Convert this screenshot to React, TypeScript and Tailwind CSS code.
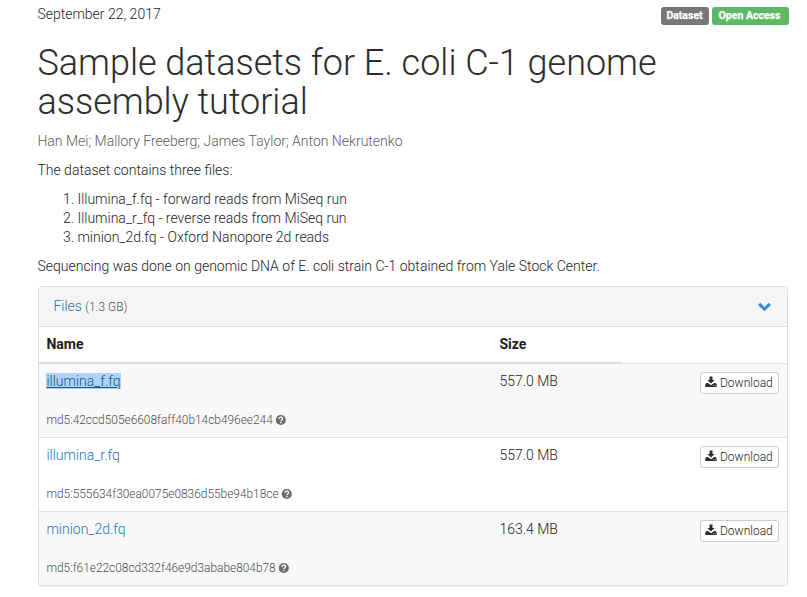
const files = [
  { name: "illumina_f.fq", size: "557.0 MB", md5: "42ccd505e6608faff40b14cb496ee244", selected: true },
  { name: "illumina_r.fq", size: "557.0 MB", md5: "555634f30ea0075e0836d55be94b18ce", selected: false },
  { name: "minion_2d.fq", size: "163.4 MB", md5: "f61e22c08cd332f46e9d3ababe804b78", selected: false },
];

const badge = "rounded-[3px] h-[18px] flex items-center justify-center text-[10.5px] font-bold text-white leading-none [-webkit-text-stroke:0.25px_white]";

function DownloadIcon() {
  return (
    <svg viewBox="0 0 12 12" className="mt-[-2px] size-3 shrink-0" fill="#2c2c2c">
      <path d="M4.5 .6h3v3.5h2.1L6 7.6 2.4 4.1h2.1z" />
      <path fillRule="evenodd" d="M1.5 7.1h1.4L6 9.2l3.1-2.1h1.4l1.2 1.5v2.3H.3V8.6zM8.3 9.3v.6h.8v-.6zM9.8 9.3v.6h.8v-.6z" />
    </svg>
  );
}

function ChevronIcon() {
  return (
    <svg viewBox="0 0 14 10" className="h-[10px] w-[14px]" fill="#428bca">
      <path d="M0 3 2.2.8l4.3 4.2L10.8.8 13 3 6.5 9.3z" />
    </svg>
  );
}

function QuestionIcon() {
  return (
    <svg viewBox="0 0 12 12" className="-mt-px ml-[2px] size-3 shrink-0">
      <circle cx="5.8" cy="6" r="5.1" fill="#6c6c6c" />
      <path d="M3.9 4.9C4 2.5 7.6 2.5 7.6 4.7 7.6 6 5.9 5.9 5.9 7.2" fill="none" stroke="white" strokeWidth="1.4" />
      <path d="M5.2 8h1.4v1.3H5.2z" fill="white" />
    </svg>
  );
}

export default function App() {
  return (
    <div className="h-[597px] w-[807px] overflow-hidden bg-white pl-[38px] pr-[19px] font-['Roboto',sans-serif] text-[14px] font-light leading-5 text-[#1c1c1c]">
      <div className="-ml-px -mr-px flex h-[44px] justify-between">
        <span className="pl-[0.4px] pt-1">September 22, 2017</span>
        <div className="flex gap-[3px] pt-[7px]">
          <span className={badge + " w-[48px] bg-[#777] pr-px"}>Dataset</span>
          <span className={badge + " w-[77px] bg-[#5cb865] pr-[2px]"}>Open Access</span>
        </div>
      </div>
      <div className="-ml-[0.6px]">
        <h1 className="text-[36px] leading-[39px] tracking-[-0.015px] text-[#2c2c2c]">Sample datasets for E. coli C-1 genome<br />assembly tutorial</h1>
        <p className="mt-[9px] text-[#5c5c5c]">Han Mei; Mallory Freeberg; James Taylor; Anton Nekrutenko</p>
        <p className="mt-[9px]">The dataset contains three files:</p>
        <ol className="mt-[10px] list-decimal pl-10 leading-[19px]">
          <li>Illumina_f.fq - forward reads from MiSeq run</li>
          <li>Illumina_r_fq - reverse reads from MiSeq run</li>
          <li>minion_2d.fq - Oxford Nanopore 2d reads</li>
        </ol>
        <p className="mt-[9px]">Sequencing was done on genomic DNA of E. coli strain C-1 obtained from Yale Stock Center.</p>
      </div>
      <section className="mt-[10px] h-[300px] overflow-hidden rounded-[4px] border border-[#ddd] shadow-[0_1px_1px_rgba(0,0,0,0.05)]">
        <header className="flex h-[39px] items-center justify-between bg-[#f5f5f5] pl-[14.4px] pr-[15px]">
          <span><span className="text-[#2474b8]">Files</span> <small className="text-[11.9px] text-[#4c4c4c]">(1.3 GB)</small></span>
          <ChevronIcon />
        </header>
        <div className="flex h-[37px] border-t border-[#ddd] font-bold">
          <span className="w-[461px] border-b border-[#ddd] pl-[7.4px] pt-[7px]">Name</span>
          <span className="w-[122px] border-b border-[#ddd] pt-[7px] -indent-[0.6px]">Size</span>
        </div>
        <div>
          {files.map((f) => (
            <div key={f.name} className="flex h-[74px] border-t border-[#ddd] pl-[7.4px] pr-2 pt-[7px] odd:bg-[#f9f9f9]">
              <div className="w-[453px]">
                <a className={f.selected ? "bg-[#add5fb] text-[#23527c] underline" : "text-[#2474b8]"}>{f.name}</a>
                <div className="mt-[19px] flex items-center text-[11.9px] text-[#4c4c4c]">md5:{f.md5}<QuestionIcon /></div>
              </div>
              <span>{f.size}</span>
              <button className="ml-auto mt-px flex h-[22px] w-[79px] items-center gap-[3px] rounded-[3px] border border-[#ccc] bg-white pl-1 text-[12px]"><DownloadIcon />Download</button>
            </div>
          ))}
        </div>
      </section>
    </div>
  );
}
